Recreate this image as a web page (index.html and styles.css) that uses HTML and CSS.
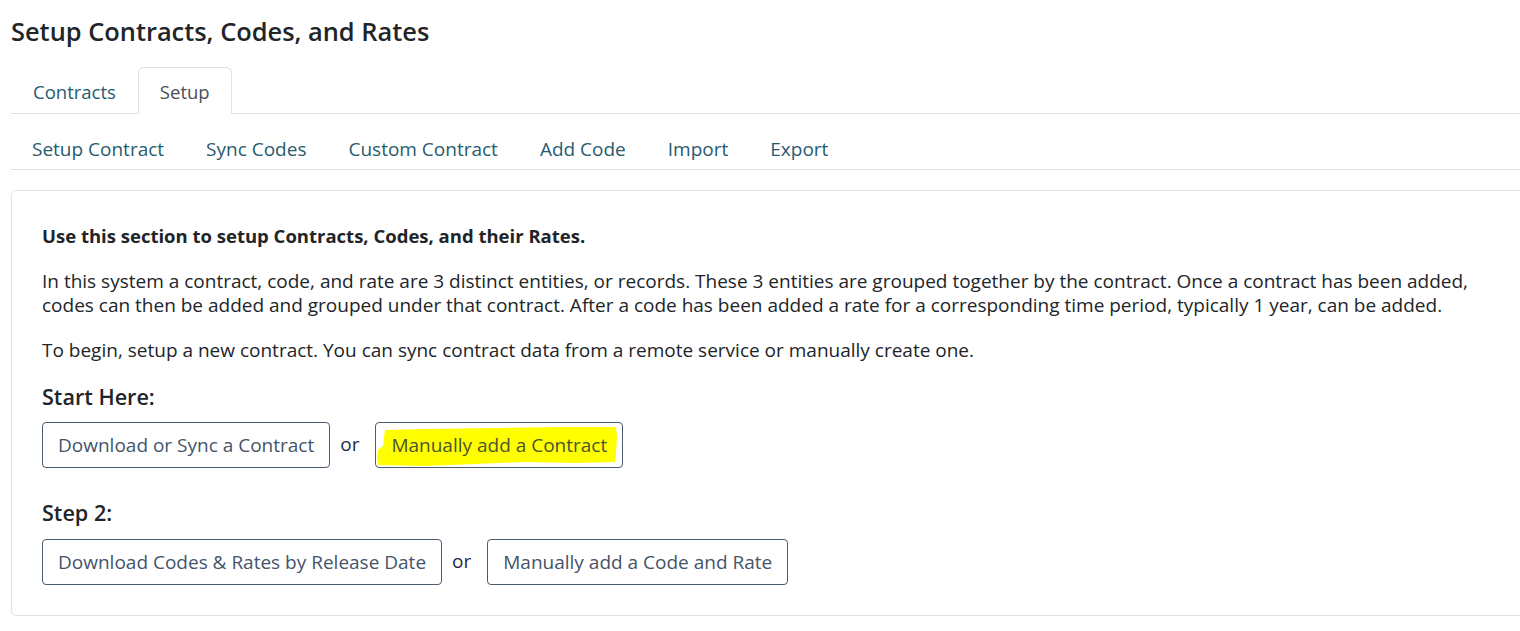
FILE: index.html
```html
<!DOCTYPE html>
<html lang="en">
<head>
    <meta charset="UTF-8">
    <meta name="viewport" content="width=device-width, initial-scale=1.0">
    <title>Setup Contracts, Codes, and Rates</title>
    <link rel="stylesheet" href="styles.css">
</head>
<body>
    <div class="page">
        <h1 class="page-title">Setup Contracts, Codes, and Rates</h1>

        <ul class="tabs">
            <li><a href="#">Contracts</a></li>
            <li class="active"><a href="#">Setup</a></li>
        </ul>

        <ul class="subnav">
            <li><a href="#">Setup Contract</a></li>
            <li><a href="#">Sync Codes</a></li>
            <li><a href="#">Custom Contract</a></li>
            <li><a href="#">Add Code</a></li>
            <li><a href="#">Import</a></li>
            <li><a href="#">Export</a></li>
        </ul>

        <div class="card">
            <p class="lead">Use this section to setup Contracts, Codes, and their Rates.</p>
            <p>In this system a contract, code, and rate are 3 distinct entities, or records. These 3 entities are grouped together by the contract. Once a contract has been added, codes can then be added and grouped under that contract. After a code has been added a rate for a corresponding time period, typically 1 year, can be added.</p>
            <p>To begin, setup a new contract. You can sync contract data from a remote service or manually create one.</p>

            <h4 class="step">Start Here:</h4>
            <div class="actions">
                <button class="btn">Download or Sync a Contract</button>
                <span class="or">or</span>
                <button class="btn marked">
                    <!-- yellow marker scribble over the button -->
                    <svg class="marker" width="248" height="46" viewBox="0 0 248 46">
                        <path d="M10 8 L50 7 L120 6 L190 5 L241 5 L242 15 L241 30 L240 40 L200 41 L150 40 L100 42 L50 44 L3 43 L2 36 L3 28 L8 24 L9 15 Z" fill="#ffff00"/>
                    </svg>
                    <span>Manually add a Contract</span>
                </button>
            </div>

            <h4 class="step step-two">Step 2:</h4>
            <div class="actions">
                <button class="btn">Download Codes &amp; Rates by Release Date</button>
                <span class="or">or</span>
                <button class="btn">Manually add a Code and Rate</button>
            </div>
        </div>
    </div>
</body>
</html>
```

FILE: styles.css
```css
body {
    margin: 0;
    padding: 0;
    font-family: "Open Sans", "Noto Sans", sans-serif;
    color: #212529;
    background-color: #fff;
    overflow-x: hidden;
}
.page {
    padding-left: 11px;
}
.page-title {
    margin: 0;
    padding-top: 14px;
    font-size: 25.4px;
    line-height: 34px;
    font-weight: 600;
    color: #212529;
}
.tabs {
    list-style: none;
    margin: 19px 0 0 0;
    padding: 0;
    display: flex;
    border-bottom: 1px solid #dee2e6;
}
.tabs li {
    margin-bottom: -1px;
}
.tabs a {
    display: block;
    padding: 11px 21px 8px;
    font-size: 18.5px;
    line-height: 26px;
    color: #285b70;
    text-decoration: none;
    border: 1px solid transparent;
    border-top-left-radius: 6px;
    border-top-right-radius: 6px;
}
.tabs .active a {
    color: #495057;
    background-color: #fff;
    border-color: #dee2e6 #dee2e6 #fff;
}
.subnav {
    list-style: none;
    margin: 0;
    padding: 0;
    display: flex;
    border-bottom: 1px solid #dee2e6;
}
.subnav a {
    display: block;
    padding: 22px 21px 7px;
    font-size: 19px;
    line-height: 26px;
    color: #285b70;
    text-decoration: none;
}
.card {
    margin-top: 20px;
    margin-right: -20px;
    padding: 33px 30px 30px;
    border: 1px solid #dee2e6;
    border-radius: 5px;
}
.card p {
    margin: 0 0 21px 0;
    font-size: 19px;
    line-height: 24px;
}
.card p.lead {
    font-weight: 700;
    font-size: 18.5px;
}
.step {
    margin: 18px 0 11px 0;
    font-size: 21.6px;
    line-height: 28px;
    font-weight: 600;
}
.step-two {
    margin-top: 31px;
    margin-bottom: 12px;
}
.actions {
    display: flex;
    align-items: center;
}
.or {
    margin: 0 16px 0 10px;
    font-size: 19px;
    color: #1d2b4a;
    padding-bottom: 3px;
}
.btn {
    position: relative;
    font-family: "Open Sans", "Noto Sans", sans-serif;
    font-size: 19px;
    line-height: 26px;
    padding: 9px 15px;
    color: #44546a;
    background-color: #fff;
    border: 1px solid #4b5a6e;
    border-radius: 4px;
    cursor: pointer;
}
.btn span {
    position: relative;
}
.marker {
    position: absolute;
    left: -1px;
    top: -1px;
}
.marked {
    color: #4a5530;
}
```
